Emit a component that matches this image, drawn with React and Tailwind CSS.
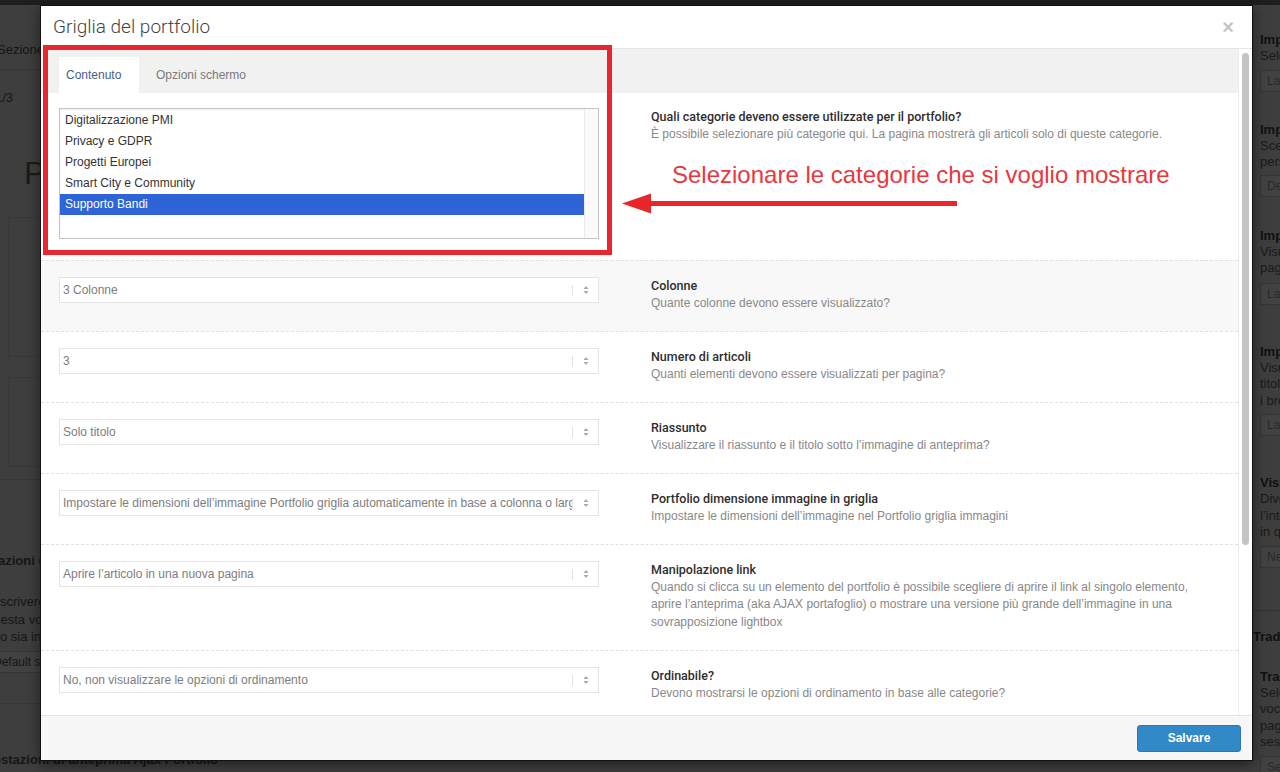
import React from 'react';

const categories = ['Digitalizzazione PMI', 'Privacy e GDPR', 'Progetti Europei', 'Smart City e Community', 'Supporto Bandi'];

const rows = [
  { value: '3 Colonne', title: 'Colonne', desc: ['Quante colonne devono essere visualizzato?'], hover: true },
  { value: '3', title: 'Numero di articoli', desc: ['Quanti elementi devono essere visualizzati per pagina?'] },
  { value: 'Solo titolo', title: 'Riassunto', desc: ['Visualizzare il riassunto e il titolo sotto l’immagine di anteprima?'] },
  {
    value: 'Impostare le dimensioni dell’immagine Portfolio griglia automaticamente in base a colonna o larghezza',
    title: 'Portfolio dimensione immagine in griglia',
    desc: ['Impostare le dimensioni dell’immagine nel Portfolio griglia immagini'],
  },
  {
    value: 'Aprire l’articolo in una nuova pagina',
    title: 'Manipolazione link',
    desc: [
      'Quando si clicca su un elemento del portfolio è possibile scegliere di aprire il link al singolo elemento,',
      'aprire l’anteprima (aka AJAX portafoglio) o mostrare una versione più grande dell’immagine in una',
      'sovrapposizione lightbox',
    ],
  },
  { value: 'No, non visualizzare le opzioni di ordinamento', title: 'Ordinabile?', desc: ['Devono mostrarsi le opzioni di ordinamento in base alle categorie?'] },
];

const bgBlocks = [
  { mt: 'mt-[27px]', title: 'Impostazioni', lines: ['Selezionare'], input: 'Layout', imt: 'mt-[5px]' },
  { mt: 'mt-[30px]', title: 'Impostazioni', lines: ['Scegliere', 'personalizzato'], input: 'Default', imt: 'mt-[4px]' },
  { mt: 'mt-[31px]', title: 'Impostazioni', lines: ['Visualizzare', 'pagina'], input: 'Layout', imt: 'mt-[6px]' },
  { mt: 'mt-[39px]', title: 'Impostazioni', lines: ['Visualizzare', 'titolo', 'i breadcrumb'], input: 'Layout', imt: 'mt-[5px]' },
  { mt: 'mt-[39px]', title: 'Visibilità', lines: ['Diverso', 'l’intestazione', 'in questa'], input: 'Nessuno', imt: 'mt-[5px]' },
];

const Arrows = () => (
  <svg width="6" height="10" viewBox="0 0 6 10">
    <path d="M3 1 L5.5 4 L0.5 4 Z" fill="#a8a8a8" />
    <path d="M3 9 L5.5 6 L0.5 6 Z" fill="#a8a8a8" />
  </svg>
);

const Select = ({ value }) => (
  <div className="h-[26px] border border-[#e4e4e4] bg-white flex items-center text-[12px] text-[#7d7d7d]">
    <div className="flex-1 overflow-hidden whitespace-nowrap pl-[3px]">{value}</div>
    <div className="w-px h-[11px] bg-[#e2e2e2]" />
    <div className="w-[25px] flex justify-center">
      <Arrows />
    </div>
  </div>
);

const Info = ({ title, desc }) => (
  <div className="text-[12px] leading-[17.5px] whitespace-nowrap">
    <div className="font-['Roboto',sans-serif] font-medium text-[12.5px] text-[#2e2e2e]">{title}</div>
    {desc.map((d) => (
      <div key={d} className="text-[#888]">{d}</div>
    ))}
  </div>
);

const BgBlock = ({ mt, title, lines, input, imt }) => (
  <div className={`${mt} whitespace-nowrap`}>
    <div className="text-[13px] leading-[16px] font-bold text-[#111]">{title}</div>
    {lines.map((l) => (
      <div key={l} className="text-[13px] leading-[16.5px] text-[#1a1a1a]">{l}</div>
    ))}
    <div className={`${imt} h-[22px] w-[180px] border border-[#353535] bg-[#424242] text-[12px] leading-[20px] pl-[6px] text-[#2a2a2a]`}>{input}</div>
  </div>
);

export default function App() {
  return (
    <div className="relative w-[1280px] h-[772px] overflow-hidden bg-[#3e3e3e] font-['Liberation_Sans',Arial,sans-serif]">
      {/* page behind the overlay */}
      <div className="h-[5px] bg-[#1e1e1e]" />
      <div className="flex justify-between">
        <div className="w-[200px] shrink-0 text-[13px] text-[#161616] whitespace-nowrap">
          <div className="mt-[37px] -ml-[3px] leading-[15px]">Sezione</div>
          <div className="border-t border-[#363636] mt-[12px]" />
          <div className="mt-[20px] -ml-[5px] leading-[15px]">1/3</div>
          <div className="mt-[52px] ml-[24px] text-[32px] font-light leading-[32px] text-[#1b1b1b]">P</div>
          <div className="mt-[28px] ml-[8px] h-[140px] border border-[#383838]" />
          <div className="mt-[20px] ml-[8px] h-[90px] border border-[#383838]" />
          <div className="mt-[12px] border-t border-[#363636]" />
          <div className="mt-[73px] -ml-[2px] font-bold leading-[16px]">azioni di</div>
          <div className="mt-[24px] leading-[17.5px]">scrivere</div>
          <div className="-ml-[14px] leading-[17.5px]">questa voce</div>
          <div className="leading-[17.5px]">o sia in</div>
          <div className="mt-[5px] -ml-[14px] h-[22px] w-[180px] border border-[#353535] bg-[#424242] leading-[20px] pl-[6px] text-[12px]">Default se</div>
          <div className="mt-[30px] border-t border-[#363636]" />
          <div className="mt-[48px] -ml-[30px] font-bold leading-[16px]">Impostazioni di anteprima Ajax Portfolio</div>
        </div>
        <div className="w-[27px] shrink-0 overflow-hidden">
          <div className="pl-[7px]">
            {bgBlocks.map((b, i) => (
              <BgBlock key={i} {...b} />
            ))}
          </div>
          <div className="mt-[42px] border-t border-[#333]" />
          <div className="mt-[18px] text-[13px] leading-[16px] font-bold text-[#111] whitespace-nowrap">Traduzioni</div>
          <div className="pl-[7px]">
            <BgBlock mt="mt-[24px]" title="Traduzione" lines={['Selezionare', 'voce', 'pagina', 'sessione']} input="Seleziona" imt="mt-[5px]" />
          </div>
        </div>
      </div>

      {/* modal */}
      <div className="absolute left-[40px] top-[5px] w-[1213px] h-[756px] bg-white border border-[#111] shadow-[0_3px_12px_rgba(0,0,0,0.5)] flex flex-col">
        <div className="h-[43px] shrink-0 border-b border-[#e6e6e6] flex items-center justify-between pl-[12px] pr-[18px]">
          <div className="font-['Roboto',sans-serif] font-light text-[19px] text-[#444]">Griglia del portfolio</div>
          <div className="text-[20px] font-bold leading-none text-[#c4c4c4]">×</div>
        </div>

        <div className="h-[666px] shrink-0 flex">
          <div className="w-[1197px] overflow-hidden">
            <div className="h-[44px] bg-[#f1f1f1] flex items-end pl-[18px] text-[12px]">
              <div className="h-[36px] w-[80px] bg-white pl-[7px] flex items-center text-[#46618c]">Contenuto</div>
              <div className="h-[36px] ml-[17px] flex items-center text-[#7a7a7a]">Opzioni schermo</div>
            </div>

            <div className="pt-[15px] pb-[21px] pl-[18px] grid grid-cols-[540px_1fr] gap-x-[52px]">
              <div className="h-[131px] border border-[#c4c4c4] shadow-[inset_0_1px_2px_rgba(0,0,0,0.08)] flex text-[12px] text-[#333]">
                <div className="flex-1 pt-[1px]">
                  {categories.map((c, i) => (
                    <div key={c} className={`h-[21px] leading-[21px] pl-[5px] ${i === 4 ? 'bg-[#2f64d6] text-white' : ''}`}>{c}</div>
                  ))}
                </div>
                <div className="w-[14px] border-l border-[#ececec] bg-[#fafafa]" />
              </div>
              <Info
                title="Quali categorie deveno essere utilizzate per il portfolio?"
                desc={['È possibile selezionare più categorie qui. La pagina mostrerà gli articoli solo di queste categorie.']}
              />
            </div>

            {rows.map((r) => (
              <div
                key={r.title}
                className={`border-t border-dashed border-[#e0e0e0] pt-[16px] pb-[19px] pl-[18px] grid grid-cols-[540px_1fr] gap-x-[52px] ${r.hover ? 'bg-[#f8f8f8]' : ''}`}
              >
                <Select value={r.value} />
                <Info title={r.title} desc={r.desc} />
              </div>
            ))}
          </div>
          <div className="w-[14px] border-l border-[#ececec] pt-[4px] flex justify-center">
            <div className="w-[7px] h-[492px] rounded-full bg-[#c3c3c3]" />
          </div>
        </div>

        <div className="flex-1 border-t border-[#e2e2e2] bg-[#f7f7f7] flex items-center justify-end pr-[11px]">
          <div className="w-[104px] h-[27px] rounded-[3px] bg-[#3189c8] border border-[#2a78b0] text-white text-[12px] font-bold flex items-center justify-center">
            Salvare
          </div>
        </div>
      </div>

      {/* red annotation */}
      <div className="absolute left-[43px] top-[45px] w-[569px] h-[210px] border-[5px] border-[#e8262b]" />
      <div className="absolute left-[672px] top-[163px] text-[24px] leading-[24px] text-[#e8383d] whitespace-nowrap">
        Selezionare le categorie che si voglio mostrare
      </div>
      <svg className="absolute left-[621px] top-[193px]" width="337" height="21" viewBox="0 0 337 21">
        <path d="M1 10.5 L30 0.5 L30 20.5 Z" fill="#e8262b" />
        <rect x="28" y="8" width="308" height="5" fill="#e8262b" />
      </svg>
    </div>
  );
}
